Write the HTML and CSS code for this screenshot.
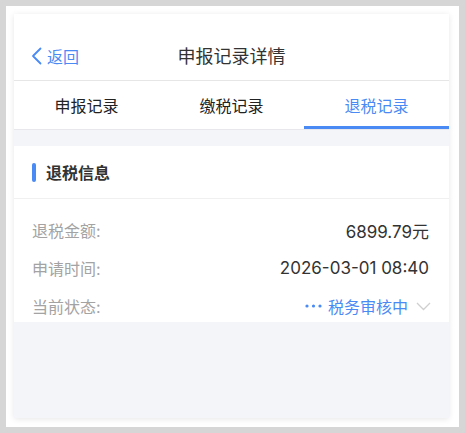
FILE: index.html
```html
<!DOCTYPE html>
<html lang="zh-CN">
<head>
  <meta charset="UTF-8">
  <meta name="viewport" content="width=device-width, initial-scale=1.0">
  <title>申报记录详情</title>
  <link rel="stylesheet" href="styles.css">
</head>
<body>
  <div class="frame">
    <div class="card">
      <div class="nav">
        <a class="back">
          <svg width="11" height="18" viewBox="0 0 11 18"><polyline points="9.5,1.5 2,9 9.5,16.5" fill="none" stroke="#4a8af4" stroke-width="1.8" stroke-linecap="round" stroke-linejoin="round"/></svg>
          <span>返回</span>
        </a>
        <div class="title">申报记录详情</div>
      </div>

      <div class="tabs">
        <div class="tab">申报记录</div>
        <div class="tab">缴税记录</div>
        <div class="tab active">退税记录</div>
      </div>

      <div class="gap"></div>

      <div class="section">
        <div class="section-head"><i class="bar"></i>退税信息</div>
        <div class="rows">
          <div class="row">
            <span class="label">退税金额:</span>
            <span class="value">6899.79元</span>
          </div>
          <div class="row">
            <span class="label">申请时间:</span>
            <span class="value">2026-03-01 08:40</span>
          </div>
          <div class="row">
            <span class="label">当前状态:</span>
            <span class="value status">
              <svg class="dots" width="17" height="4" viewBox="0 0 17 4"><circle cx="2" cy="2" r="1.6" fill="#4a8af4"/><circle cx="8.5" cy="2" r="1.6" fill="#4a8af4"/><circle cx="15" cy="2" r="1.6" fill="#4a8af4"/></svg>
              税务审核中
              <svg class="arrow" width="15" height="9" viewBox="0 0 15 9"><polyline points="1,1 7.5,7.5 14,1" fill="none" stroke="#cfcfcf" stroke-width="1.3"/></svg>
            </span>
          </div>
        </div>
      </div>
    </div>
  </div>
</body>
</html>
```

FILE: styles.css
```css
body {
  margin: 0;
  padding: 6px;
  background-color: #d6d6d6;
  font-family: "Inter", "Noto Sans CJK SC", sans-serif;
}
.frame {
  background-color: #fff;
  height: 421px;
  padding: 8px 10px 9px 8px;
  box-sizing: border-box;
}
.card {
  height: 404px;
  background-color: #f4f5f9;
  box-shadow: 0 1px 6px rgba(0, 0, 0, 0.1);
}
.nav {
  height: 67px;
  padding-top: 18px;
  box-sizing: border-box;
  background-color: #fff;
  border-bottom: 1px solid #e6e6e6;
  display: flex;
  align-items: center;
  position: relative;
}
.back {
  display: flex;
  align-items: center;
  gap: 5px;
  padding-left: 17px;
  color: #4a8af4;
  font-size: 16px;
}
.title {
  position: absolute;
  left: 0;
  right: 0;
  top: 16px;
  bottom: 0;
  display: flex;
  align-items: center;
  justify-content: center;
  font-size: 18px;
  color: #333;
  pointer-events: none;
}
.tabs {
  display: flex;
  height: 48px;
  background-color: #fff;
  border-bottom: 1px solid #e8e8ec;
}
.tab {
  flex: 1;
  text-align: center;
  font-size: 16px;
  color: #222;
  line-height: 51px;
}
.tab.active {
  color: #4a8af4;
  box-shadow: inset 0 -3px 0 #4a8af4;
}
.gap {
  height: 16px;
}
.section {
  background-color: #fff;
}
.section-head {
  height: 52px;
  display: flex;
  align-items: center;
  gap: 10px;
  padding-left: 18px;
  font-size: 16px;
  font-weight: bold;
  color: #333;
  border-bottom: 1px solid #f0f0f0;
}
.bar {
  width: 4px;
  height: 19px;
  border-radius: 2px;
  background-color: #4a8af4;
}
.rows {
  height: 123px;
  overflow: hidden;
  padding: 12px 20px 0 18px;
  box-sizing: border-box;
}
.row {
  height: 38px;
  display: flex;
  justify-content: space-between;
  align-items: center;
}
.label {
  font-size: 16px;
  color: #a3a3a3;
}
.value {
  font-size: 17px;
  color: #333;
}
.status {
  display: flex;
  align-items: center;
  color: #4a8af4;
  font-size: 16px;
}
.dots {
  margin-right: 6px;
}
.arrow {
  margin-left: 8px;
  margin-right: -2px;
}
```
